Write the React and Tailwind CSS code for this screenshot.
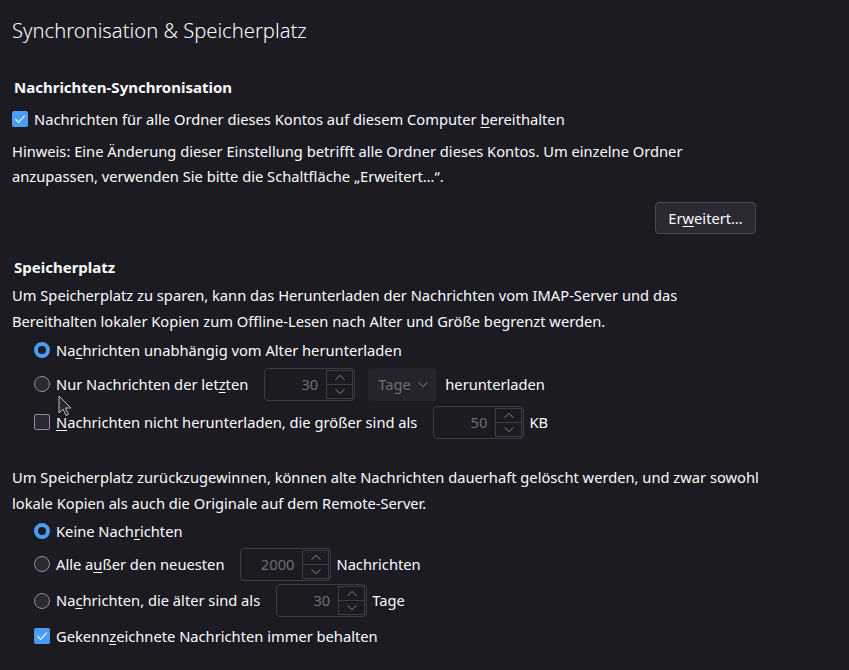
import React from "react"

const U = ({ children }) => <span className="underline underline-offset-2">{children}</span>

const Checkbox = ({ checked }) =>
  checked ? (
    <span className="flex h-4 w-4 shrink-0 items-center justify-center rounded-[2px] bg-[#4a9df0]">
      <svg viewBox="0 0 16 16" className="h-4 w-4" fill="none">
        <path d="M3.5 8.2l3 3.2 6-6.6" stroke="#e6f1ff" strokeWidth="1.2" strokeLinecap="round" strokeLinejoin="round" />
      </svg>
    </span>
  ) : (
    <span className="h-4 w-4 shrink-0 rounded-[2px] border border-[#8f8f9d] bg-[#2b2a33]" />
  )

const Radio = ({ checked }) =>
  checked ? (
    <span className="h-4 w-4 shrink-0 rounded-full border-[4px] border-[#4a9df0] bg-[#1c1b22]" />
  ) : (
    <span className="h-4 w-4 shrink-0 rounded-full border border-[#8f8f9d] bg-[#2b2a33]" />
  )

const Chevron = ({ up }) => (
  <svg viewBox="0 0 12 8" className="h-[7px] w-[12px]" fill="none">
    <path d={up ? "M1 6.5l5-5 5 5" : "M1 1.5l5 5 5-5"} stroke="#8a8a93" strokeWidth="1.1" />
  </svg>
)

const NumberBox = ({ value }) => (
  <div className="flex h-[33px] w-[91px] shrink-0 items-center rounded-[4px] border border-[#3d3c46] bg-[#1c1b22]">
    <span className="flex-1 pr-[8px] text-right text-[#6f6e78]">{value}</span>
    <div className="mr-[1px] flex h-[29px] w-[27px] flex-col border border-[#3d3c46]">
      <div className="flex flex-1 items-center justify-center border-b border-[#3d3c46]">
        <Chevron up />
      </div>
      <div className="flex flex-1 items-center justify-center">
        <Chevron />
      </div>
    </div>
  </div>
)

const Row = ({ h, mt, children }) => (
  <div className={`flex items-center pl-[22px] ${h} ${mt}`}>{children}</div>
)

export default function App() {
  return (
    <div
      className="relative h-[670px] w-[849px] overflow-hidden bg-[#1c1b22] px-[12px] text-[14.7px] text-[#fbfbfe]"
      style={{ fontFamily: '"Noto Sans", "Open Sans", sans-serif' }}
    >
      <h1 className="pt-[15px] text-[20.2px] font-light leading-[30px]">Synchronisation &amp; Speicherplatz</h1>

      <h2 className="mt-[30px] pl-[2px] text-[15px] font-bold leading-[24px]">Nachrichten-Synchronisation</h2>
      <div className="mt-[6px] flex h-[28px] items-center gap-[6px]">
        <Checkbox checked />
        <span>
          Nachrichten für alle Ordner dieses Kontos auf diesem Computer <U>b</U>ereithalten
        </span>
      </div>
      <p className="mt-[6px] leading-[25px]">
        Hinweis: Eine Änderung dieser Einstellung betrifft alle Ordner dieses Kontos. Um einzelne Ordner
        <br />
        anzupassen, verwenden Sie bitte die Schaltfläche „Erweitert…“.
      </p>
      <div className="mt-[13px] flex w-[744px] justify-end">
        <button className="h-[32px] w-[101px] rounded-[4px] border border-[#4a4953] bg-[#2b2a33] text-[14.7px] text-[#fbfbfe]">
          Er<U>w</U>eitert…
        </button>
      </div>

      <h2 className="mt-[21px] pl-[2px] text-[15px] font-bold leading-[24px]">Speicherplatz</h2>
      <p className="mt-[3px] leading-[26px]">
        Um Speicherplatz zu sparen, kann das Herunterladen der Nachrichten vom IMAP-Server und das
        <br />
        Bereithalten lokaler Kopien zum Offline-Lesen nach Alter und Größe begrenzt werden.
      </p>
      <Row h="h-[30px]" mt="mt-[1px]">
        <Radio checked />
        <span className="ml-[6px]">
          Na<U>c</U>hrichten unabhängig vom Alter herunterladen
        </span>
      </Row>
      <Row h="h-[34px]" mt="mt-[2px]">
        <Radio />
        <span className="ml-[6px]">
          Nur Nachrichten der let<U>z</U>ten
        </span>
        <div className="ml-[16px]">
          <NumberBox value="30" />
        </div>
        <div className="ml-[13px] flex h-[33px] w-[69px] items-center gap-[6px] rounded-[4px] bg-[#25242c] pl-[10px] text-[#6f6e78]">
          Tage
          <Chevron />
        </div>
        <span className="ml-[8px]">herunterladen</span>
      </Row>
      <Row h="h-[34px]" mt="mt-[4px]">
        <Checkbox />
        <span className="ml-[6px]">
          <U>N</U>achrichten nicht herunterladen, die größer sind als
        </span>
        <div className="ml-[16px]">
          <NumberBox value="50" />
        </div>
        <span className="ml-[5px]">KB</span>
      </Row>

      <p className="mt-[25px] leading-[26px]">
        Um Speicherplatz zurückzugewinnen, können alte Nachrichten dauerhaft gelöscht werden, und zwar sowohl
        <br />
        lokale Kopien als auch die Originale auf dem Remote-Server.
      </p>
      <Row h="h-[28px]" mt="mt-[1px]">
        <Radio checked />
        <span className="ml-[6px]">
          Keine Nach<U>r</U>ichten
        </span>
      </Row>
      <Row h="h-[32px]" mt="mt-[3px]">
        <Radio />
        <span className="ml-[6px]">
          Alle a<U>u</U>ßer den neuesten
        </span>
        <div className="ml-[16px]">
          <NumberBox value="2000" />
        </div>
        <span className="ml-[5px]">Nachrichten</span>
      </Row>
      <Row h="h-[33px]" mt="mt-[4px]">
        <Radio />
        <span className="ml-[6px]">
          Na<U>c</U>hrichten, die älter sind als
        </span>
        <div className="ml-[16px]">
          <NumberBox value="30" />
        </div>
        <span className="ml-[5px]">Tage</span>
      </Row>
      <Row h="h-[28px]" mt="mt-[5px]">
        <Checkbox checked />
        <span className="ml-[6px]">
          Gekenn<U>z</U>eichnete Nachrichten immer behalten
        </span>
      </Row>

      <svg viewBox="0 0 14 22" className="absolute left-[58px] top-[395px] h-[22px] w-[14px]">
        <path d="M1 1v17l4-4 3 6.5 2.5-1.2-3-6.3h5.5z" fill="#2a2a2e" stroke="#bdbdc2" strokeWidth="1" strokeLinejoin="round" />
      </svg>
    </div>
  )
}
